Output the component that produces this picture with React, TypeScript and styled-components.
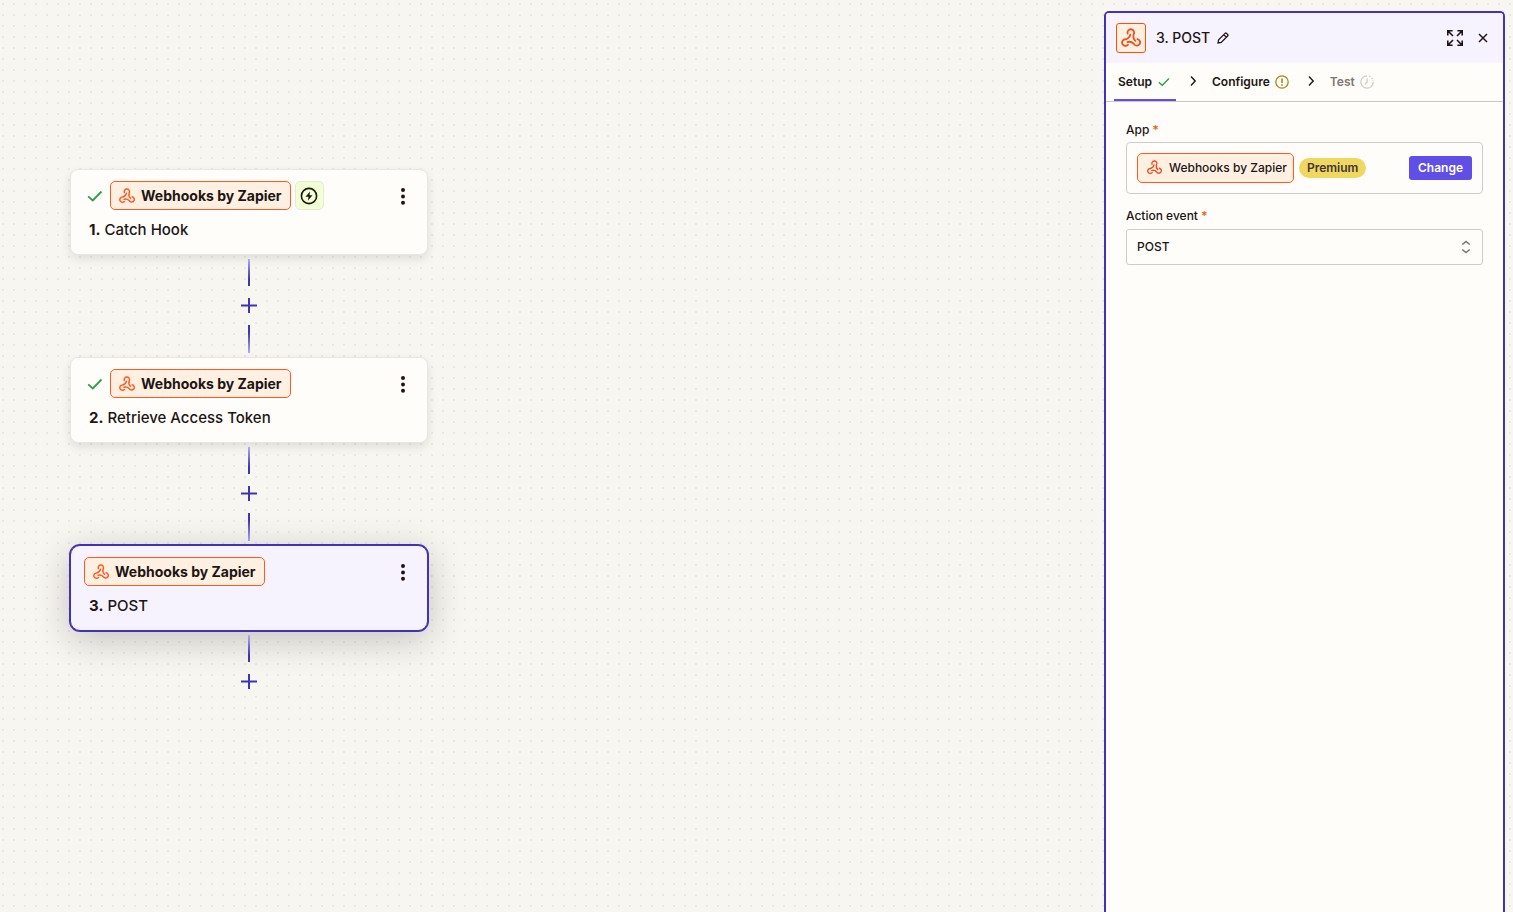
import React from "react";
import styled, { createGlobalStyle, css } from "styled-components";

const GlobalStyle = createGlobalStyle`
  *, *::before, *::after { box-sizing: border-box; }
  body {
    margin: 0;
    background: #f7f6f1;
    color: #201515;
    font-family: Inter, "Liberation Sans", sans-serif;
  }
  button, select { font: inherit; color: inherit; }
  h2 { margin: 0; padding: 0; font: inherit; }
`;

const Page = styled.div`
  display: flex;
  min-height: 100vh;
  background-color: #f7f6f1;
  background-image: conic-gradient(from 270deg at 2px 2px, #e9e8e3 90deg, transparent 0);
  background-size: 11px 11px;
  background-position: 2px 3px;
`;

const Canvas = styled.main`
  flex: 1;
  min-width: 0;
  padding: 169px 0 40px 70px;
`;

const Flow = styled.div`
  width: 358px;
  display: flex;
  flex-direction: column;
  align-items: center;
`;

const Card = styled.section<{ $selected?: boolean }>`
  width: 100%;
  height: 86px;
  padding: 11px 12px 0 13px;
  border-radius: 8px;
  background: #fffdf9;
  border: 1px solid #e8e7e0;
  box-shadow: 0 4px 10px rgba(32, 21, 21, 0.1);
  ${(p) =>
    p.$selected &&
    css`
      background: #f6f3ff;
      border-color: #4133b3;
      border-radius: 10px;
      box-shadow: 0 0 0 1px #4133b3, 0 8px 36px rgba(32, 21, 21, 0.24);
    `}
`;

const CardTop = styled.div<{ $inset?: boolean }>`
  display: flex;
  align-items: center;
  height: 29px;
  gap: 4px;
  padding-left: ${(p) => (p.$inset ? 3 : 0)}px;
`;

const CheckSlot = styled.span`
  display: flex;
  width: 19px;
`;

const AppTag = styled.span<{ $small?: boolean }>`
  display: flex;
  align-items: center;
  height: ${(p) => (p.$small ? 30 : 29)}px;
  gap: ${(p) => (p.$small ? 7 : 6)}px;
  padding: ${(p) => (p.$small ? "0 6px 1px 9px" : "0 8px 0 8px")};
  border: 1px solid #ff5a1f;
  border-radius: 5px;
  background: #fff0e2;
  font-size: ${(p) => (p.$small ? 12 : 14)}px;
  font-weight: ${(p) => (p.$small ? 500 : 700)};
  white-space: nowrap;
`;

const Instant = styled.span`
  display: flex;
  align-items: center;
  justify-content: center;
  width: 29px;
  height: 29px;
  border: 1px solid #e8e7dc;
  border-radius: 5px;
  background: #f2ffd5;
`;

const IconButton = styled.button<{ $push?: boolean }>`
  display: flex;
  align-items: center;
  justify-content: center;
  width: 24px;
  height: 24px;
  padding: 0;
  border: 0;
  background: none;
  cursor: pointer;
  margin-left: ${(p) => (p.$push ? "auto" : "0")};
`;

const StepTitle = styled.h2`
  margin-top: 10px;
  padding-left: 5px;
  font-size: 15px;
  line-height: 20px;
  font-weight: 500;
  b { font-weight: 700; }
`;

const Connector = styled.div`
  display: flex;
  flex-direction: column;
  align-items: center;
  padding: 4px 0;
  gap: 7px;
`;

const Line = styled.span<{ $up?: boolean }>`
  width: 2px;
  height: ${(p) => (p.$up ? 28 : 27)}px;
  background: linear-gradient(${(p) => (p.$up ? "to top" : "to bottom")}, #b3a8f8, #4133b3 75%);
`;

const AddButton = styled.button`
  display: flex;
  align-items: center;
  justify-content: center;
  width: 26px;
  height: 25px;
  padding: 0;
  border: 0;
  border-radius: 50%;
  background: #f7f6f1;
  cursor: pointer;
`;

const Panel = styled.aside`
  width: 401px;
  margin: 11px 8px 0 0;
  border: 2px solid #4133b3;
  border-bottom: 0;
  border-radius: 5px 5px 0 0;
  background: #fffdf9;
  overflow: hidden;
`;

const PanelHeader = styled.header`
  display: flex;
  align-items: center;
  height: 50px;
  padding: 0 8px 0 10px;
  background: #f6f3ff;
`;

const AppIcon = styled.span`
  display: flex;
  align-items: center;
  justify-content: center;
  width: 30px;
  height: 30px;
  margin-right: 10px;
  border: 1px solid #ff4f00;
  border-radius: 3px;
  background: #fff0e2;
`;

const PanelTitle = styled.h2`
  padding-right: 1px;
  font-size: 14px;
  line-height: 20px;
  font-weight: 500;
`;

const HeaderActions = styled.div`
  display: flex;
  gap: 4px;
  margin-left: auto;
`;

const Tabs = styled.nav`
  display: flex;
  height: 39px;
  padding-left: 8px;
  border-bottom: 1px solid #c9c8c2;
`;

const Tab = styled.button<{ $active?: boolean; $muted?: boolean }>`
  display: flex;
  align-items: center;
  gap: 4px;
  height: 38px;
  padding: 0 4px 1px;
  border: 0;
  background: none;
  box-shadow: ${(p) => (p.$active ? "inset 0 -2px #5f4fe6" : "none")};
  color: ${(p) => (p.$muted ? "#7d7773" : "#201515")};
  font-size: 12px;
  font-weight: 600;
  cursor: pointer;
`;

const Separator = styled.span`
  display: flex;
  align-items: center;
  justify-content: center;
  width: 32px;
  padding: 0 0 2px 2px;
`;

const Form = styled.form`
  display: flex;
  flex-direction: column;
  padding: 20px;
`;

const Label = styled.label`
  margin-bottom: 4px;
  font-size: 12px;
  line-height: 16px;
  font-weight: 500;
  span { color: #ff4f00; }
`;

const AppBox = styled.div`
  display: flex;
  align-items: center;
  height: 52px;
  margin-bottom: 14px;
  padding: 0 10px;
  border: 1px solid #cfcdc5;
  border-radius: 4px;
`;

const Premium = styled.span`
  margin-left: 5px;
  padding: 0 8px;
  border-radius: 10px;
  background: #f0d762;
  color: #403535;
  font-size: 12px;
  line-height: 20px;
  font-weight: 600;
`;

const ChangeButton = styled.button`
  height: 24px;
  margin-left: auto;
  padding: 0 9px 1px;
  border: 0;
  border-radius: 3px;
  background: #5f4fe6;
  color: #fff;
  font-size: 12px;
  font-weight: 600;
  cursor: pointer;
`;

const SelectWrap = styled.div`
  position: relative;
  padding-top: 1px;
  svg {
    position: absolute;
    right: 11px;
    top: 11px;
    pointer-events: none;
  }
`;

const Select = styled.select`
  display: block;
  appearance: none;
  width: 100%;
  height: 36px;
  padding: 0 10px 1px;
  border: 1px solid #cfcdc5;
  border-radius: 3px;
  background: #fffdf9;
  font-size: 12px;
  font-weight: 500;
`;

const HOOK = "M8 6.800A4 4 0 1 1 15.200 7.600C14.200 10.800 14.800 13.200 17.200 15.400";

const Webhook = ({ size = 16, color = "#ff5a1f" }: { size?: number; color?: string }) => (
  <svg width={size} height={size} viewBox="0 0 24 24" fill="none" stroke={color} strokeWidth="2.2" strokeLinecap="round" aria-hidden="true">
    <path d={HOOK} />
    <path d={HOOK} transform="rotate(120 12 13.400)" />
    <path d={HOOK} transform="rotate(240 12 13.400)" />
  </svg>
);

const Check = ({ scale = 16 }: { scale?: number }) => (
  <svg width="16" height="16" viewBox={`0 0 ${scale} ${scale}`} fill="none" stroke="#2e9e44" strokeWidth="1.8" aria-hidden="true">
    <path transform={`translate(${(scale - 16) / 2} ${(scale - 16) / 2})`} d="M1.2 8.3 5.8 12.4 14.500 3.500" />
  </svg>
);

const Bolt = () => (
  <svg width="18" height="18" viewBox="0 0 18 18" fill="none" aria-hidden="true">
    <circle cx="9" cy="9" r="7.600" stroke="#201515" strokeWidth="1.600" />
    <path d="M10 4.500 5.500 9.800H8.500L8 13.500 12.500 8.200H9.500z" fill="#201515" />
  </svg>
);

const Dots = () => (
  <svg width="6" height="18" viewBox="0 0 6 18" fill="#201515" aria-hidden="true">
    <circle cx="3" cy="3" r="2" />
    <circle cx="3" cy="9.400" r="2" />
    <circle cx="3" cy="15.800" r="2" />
  </svg>
);

const Plus = () => (
  <svg width="16" height="15" viewBox="0 0 16 15" stroke="#4133b3" strokeWidth="2" aria-hidden="true">
    <path d="M8 0v15M0 7.500h16" />
  </svg>
);

const Pencil = () => (
  <svg width="12" height="12" viewBox="0 0 14 14" fill="none" stroke="#201515" strokeWidth="1.500" aria-hidden="true">
    <path d="M1.200 12.800l.7-3.700L9.400 1.600c.5-.5 1.200-.5 1.700 0l1.300 1.300c.5.500.5 1.200 0 1.700L4.900 12.100zM8 3.200l2.800 2.800" />
  </svg>
);

const Expand = () => (
  <svg width="16" height="16" viewBox="0 0 16 16" fill="none" stroke="#201515" strokeWidth="1.600" aria-hidden="true">
    <path d="M.8 5.600V.8h4.800M1 1l5 5M10.400.8h4.800v4.800M15 1l-5 5M15.200 10.400v4.800h-4.800M15 15l-5-5M5.600 15.200H.8v-4.800M1 15l5-5" />
  </svg>
);

const Close = () => (
  <svg width="10" height="10" viewBox="0 0 10 10" stroke="#201515" strokeWidth="1.500" aria-hidden="true">
    <path d="M1 1l8 8M9 1L1 9" />
  </svg>
);

const Chevron = () => (
  <svg width="8" height="12" viewBox="0 0 8 12" fill="none" stroke="#201515" strokeWidth="1.400" aria-hidden="true">
    <path d="M2 1.500 6.200 6 2 10.500" />
  </svg>
);

const Warning = () => (
  <svg width="16" height="16" viewBox="0 0 16 16" fill="none" stroke="#a5861b" strokeWidth="1.300" aria-hidden="true">
    <circle cx="8" cy="8" r="6.200" />
    <path d="M8 4.500v4.500" strokeWidth="1.600" />
    <path d="M8 10.200v1.600" strokeWidth="1.600" />
  </svg>
);

const Pending = () => (
  <svg width="16" height="16" viewBox="0 0 16 16" fill="none" stroke="#cfcdc5" strokeWidth="1.300" aria-hidden="true">
    <path d="M8 1.800a6.200 6.200 0 1 0 6.200 6.200" />
    <path d="M10 2.100a6.200 6.200 0 0 1 4.200 5" strokeDasharray="1.600 1.400" />
    <path d="M8.200 4.500V8L6 10.200" />
  </svg>
);

const UpDown = () => (
  <svg width="12" height="16" viewBox="0 0 12 16" fill="none" stroke="#77726d" strokeWidth="1.500" aria-hidden="true">
    <path d="M2.300 5.500 6 2.400l3.700 3.100M2.300 10.500 6 13.600l3.700-3.100" />
  </svg>
);

const steps = [
  { title: "Catch Hook", done: true, instant: true },
  { title: "Retrieve Access Token", done: true },
  { title: "POST", selected: true },
];

export default function App() {
  return (
    <>
      <GlobalStyle />
      <Page>
        <Canvas>
          <Flow>
            {steps.map((step, i) => (
              <React.Fragment key={step.title}>
                <Card $selected={step.selected}>
                  <CardTop $inset={step.done}>
                    {step.done && <CheckSlot><Check /></CheckSlot>}
                    <AppTag><Webhook />Webhooks by Zapier</AppTag>
                    {step.instant && <Instant><Bolt /></Instant>}
                    <IconButton $push type="button" aria-label="Step options"><Dots /></IconButton>
                  </CardTop>
                  <StepTitle><b>{i + 1}.</b> {step.title}</StepTitle>
                </Card>
                <Connector>
                  <Line />
                  <AddButton type="button" aria-label="Add step"><Plus /></AddButton>
                  {i < steps.length - 1 && <Line $up />}
                </Connector>
              </React.Fragment>
            ))}
          </Flow>
        </Canvas>
        <Panel>
          <PanelHeader>
            <AppIcon><Webhook size={20} color="#f0501e" /></AppIcon>
            <PanelTitle>3. POST</PanelTitle>
            <IconButton type="button" aria-label="Rename step"><Pencil /></IconButton>
            <HeaderActions>
              <IconButton type="button" aria-label="Expand"><Expand /></IconButton>
              <IconButton type="button" aria-label="Close"><Close /></IconButton>
            </HeaderActions>
          </PanelHeader>
          <Tabs>
            <Tab type="button" $active>Setup <Check scale={21} /></Tab>
            <Separator><Chevron /></Separator>
            <Tab type="button">Configure <Warning /></Tab>
            <Separator><Chevron /></Separator>
            <Tab type="button" $muted>Test <Pending /></Tab>
          </Tabs>
          <Form>
            <Label htmlFor="change-app">App <span>*</span></Label>
            <AppBox>
              <AppTag $small><Webhook size={15} color="#f0501e" />Webhooks by Zapier</AppTag>
              <Premium>Premium</Premium>
              <ChangeButton id="change-app" type="button">Change</ChangeButton>
            </AppBox>
            <Label htmlFor="action-event">Action event <span>*</span></Label>
            <SelectWrap>
              <Select id="action-event" defaultValue="POST"><option>POST</option></Select>
              <UpDown />
            </SelectWrap>
          </Form>
        </Panel>
      </Page>
    </>
  );
}
